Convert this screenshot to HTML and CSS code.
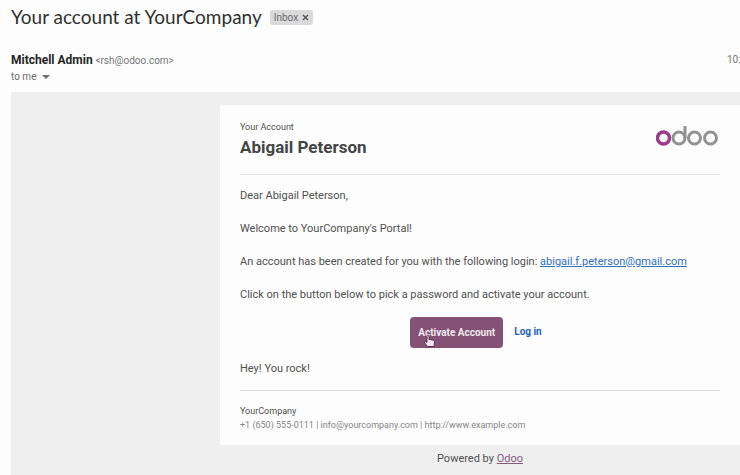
FILE: index.html
```html
<!DOCTYPE html>
<html lang="en">
<head>
	<title>Your account at YourCompany</title>
	<meta charset="utf-8">
	<meta name="viewport" content="width=device-width,initial-scale=1">
	<link rel="stylesheet" href="styles.css">
</head>
<body>
	<header class="subject">
		<h1>Your account at YourCompany</h1>
		<span class="label">Inbox <button type="button" aria-label="Remove label Inbox"><svg width="7" height="7" viewBox="0 0 7 7"><path d="M1 1L6 6M6 1L1 6"/></svg></button></span>
	</header>
	<div class="sender">
		<p class="from"><b>Mitchell Admin</b> <span>&lt;rsh@odoo.com&gt;</span></p>
		<time class="time">10:</time>
	</div>
	<button type="button" class="to">to me <svg width="8" height="4" viewBox="0 0 8 4"><path d="M0 0H8L4 4Z"/></svg></button>
	<main class="mail">
		<article class="card">
			<header class="card-head">
				<div>
					<p class="kicker">Your Account</p>
					<h2>Abigail Peterson</h2>
				</div>
				<svg class="logo" width="64" height="24" viewBox="0 0 64 24" role="img" aria-label="odoo">
					<g fill="none" stroke="#929292" stroke-width="3">
						<circle cx="23" cy="14" r="6"/>
						<path d="M29 2V14"/>
						<circle cx="38.500" cy="14" r="6"/>
						<circle cx="54.500" cy="14" r="6"/>
						<circle cx="7.500" cy="14" r="6" stroke="#9c3a8b" stroke-width="3.500"/>
					</g>
				</svg>
			</header>
			<div class="message">
				<p>Dear Abigail Peterson,</p>
				<p>Welcome to YourCompany's Portal!</p>
				<p>An account has been created for you with the following login: <a href="mailto:abigail.f.peterson@gmail.com">abigail.f.peterson@gmail.com</a></p>
				<p>Click on the button below to pick a password and activate your account.</p>
			</div>
			<div class="actions">
				<button type="button" class="activate">Activate Account
					<svg class="cursor" width="11" height="12" viewBox="0 0 11 12"><path d="M3 6V1.500Q3 .5 4 .5T5 1.500V4.500L9 5Q10.500 5.300 10.500 6.500L10 11.500H3.500L.7 8Q0 6.500 1.500 6.500L3 7.500Z"/></svg>
				</button>
				<a class="login" href="#login">Log in</a>
			</div>
			<p class="closing">Hey! You rock!</p>
			<footer class="card-foot">
				<p class="company">YourCompany</p>
				<p>+1 (650) 555-0111 | info@yourcompany.com | http://www.example.com</p>
			</footer>
		</article>
		<p class="powered">Powered by <a href="#odoo">Odoo</a></p>
	</main>
</body>
</html>
```

FILE: styles.css
```css
body {
	background: #fdfdfd;
	color: #505050;
	display: flex;
	flex-direction: column;
	font: 11px/16px Roboto, "Liberation Sans", sans-serif;
	margin: 0;
	min-height: 100vh;
	padding-left: 11px;
}

h1, h2, p {
	margin: 0;
}

button {
	background: none;
	border: 0;
	color: inherit;
	cursor: pointer;
	font: inherit;
	padding: 0;
}

.subject {
	align-items: center;
	display: flex;
	gap: 8px;
	height: 34px;
}

.subject h1 {
	color: #303030;
	font: 19px/24px Lato, sans-serif;
}

.label {
	align-items: center;
	background: #dadada;
	border-radius: 3px;
	color: #6c6c6c;
	display: flex;
	font-size: 10px;
	gap: 4px;
	line-height: 15px;
	padding: 0 4px;
}

.label button {
	display: flex;
}

.label path {
	stroke: #555;
	stroke-width: 1.500;
}

.sender {
	display: flex;
	justify-content: space-between;
	margin-top: 18px;
}

.from b {
	color: #252525;
	font-size: 12px;
}

.from span, .time {
	color: #777;
	font-size: 10px;
}

.time {
	overflow: hidden;
	width: 13px;
}

.to {
	align-items: center;
	align-self: flex-start;
	color: #6c6c6c;
	display: flex;
	font-size: 10px;
	gap: 6px;
}

.to path {
	fill: #707070;
}

.mail {
	background: #efefef;
	flex: 1;
	margin-top: 7px;
	padding: 13px 0 0 209px;
}

.card {
	background: #fdfdfd;
	padding: 14px 20px 13px;
}

.card-head {
	border-bottom: 1px solid #e4e4e4;
	display: flex;
	height: 55px;
	justify-content: space-between;
}

.kicker {
	font-size: 9px;
}

.card-head h2 {
	color: #454545;
	font-size: 17px;
	line-height: 24px;
}

.logo {
	margin-top: 5px;
}

.message {
	padding: 13px 0;
}

.message p + p {
	margin-top: 17px;
}

.message a {
	color: #2f6fc0;
}

.actions {
	align-items: center;
	display: flex;
	font-size: 10px;
	font-weight: bold;
	gap: 3px;
	justify-content: center;
}

.activate {
	background: #835275;
	border-radius: 4px;
	color: #f2e9ef;
	line-height: 15px;
	padding: 8px;
	position: relative;
}

.cursor {
	left: 14px;
	position: absolute;
	top: 18px;
}

.cursor path {
	fill: #f8e6f2;
	stroke: #543449;
}

.login {
	color: #2463b4;
	padding: 8px;
	text-decoration: none;
}

.closing {
	padding: 13px 0;
}

.card-foot {
	border-top: 1px solid #d6d6d6;
	color: #858585;
	font-size: 9px;
	line-height: 14px;
	padding-top: 13px;
}

.company {
	color: #505050;
}

.powered {
	padding: 6px 0;
	text-align: center;
}

.powered a {
	color: #875a7b;
}
```
